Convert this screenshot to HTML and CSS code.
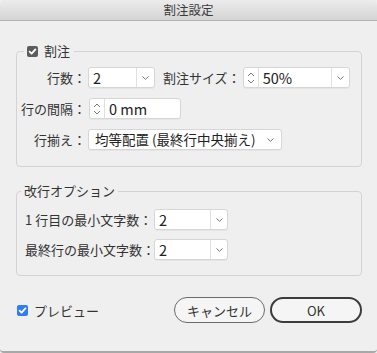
FILE: index.html
```html
<!DOCTYPE html>
<html lang="ja">
<head>
<meta charset="utf-8">
<link rel="stylesheet" href="styles.css">
</head>
<body>
<div class="window">
  <div class="titlebar">割注設定</div>
  <div class="content">
    <fieldset class="group g1">
      <legend class="legend"><span class="cb cb-gray"><svg viewBox="0 0 11 11" width="11" height="11"><path d="M2.6 5.6 L4.6 7.6 L8.4 3.4" fill="none" stroke="#fff" stroke-width="1.8" stroke-linecap="round" stroke-linejoin="round"/></svg></span>割注</legend>
      <div class="rows rows1">
        <div class="row">
          <span class="label l1">行数：</span>
          <div class="box select w-s1"><span class="val">2</span><span class="chev"><svg viewBox="0 0 7 4" width="7" height="4"><path d="M0.5 0.5 L3.5 3.3 L6.5 0.5" fill="none" stroke="#777" stroke-width="1"/></svg></span></div>
          <span class="label l-size">割注サイズ：</span>
          <div class="box spin w-sz"><span class="arrows"><svg viewBox="0 0 8 14" width="8" height="14"><path d="M1 5 L4 2 L7 5 M1 9 L4 12 L7 9" fill="none" stroke="#777" stroke-width="1"/></svg></span><span class="val">50%</span><span class="chev"><svg viewBox="0 0 7 4" width="7" height="4"><path d="M0.5 0.5 L3.5 3.3 L6.5 0.5" fill="none" stroke="#777" stroke-width="1"/></svg></span></div>
        </div>
        <div class="row">
          <span class="label l1">行の間隔：</span>
          <div class="box spin w-gap"><span class="arrows"><svg viewBox="0 0 8 14" width="8" height="14"><path d="M1 5 L4 2 L7 5 M1 9 L4 12 L7 9" fill="none" stroke="#777" stroke-width="1"/></svg></span><span class="val">0 mm</span></div>
        </div>
        <div class="row">
          <span class="label l1">行揃え：</span>
          <div class="box select w-align"><span class="val">均等配置 (最終行中央揃え)</span><span class="chev"><svg viewBox="0 0 7 4" width="7" height="4"><path d="M0.5 0.5 L3.5 3.3 L6.5 0.5" fill="none" stroke="#777" stroke-width="1"/></svg></span></div>
        </div>
      </div>
    </fieldset>

    <fieldset class="group g2">
      <legend class="legend legend2">改行オプション</legend>
      <div class="rows rows2">
        <div class="row">
          <span class="label l2">1 行目の最小文字数：</span>
          <div class="box select w-s2"><span class="val">2</span><span class="chev"><svg viewBox="0 0 7 4" width="7" height="4"><path d="M0.5 0.5 L3.5 3.3 L6.5 0.5" fill="none" stroke="#777" stroke-width="1"/></svg></span></div>
        </div>
        <div class="row">
          <span class="label l2">最終行の最小文字数：</span>
          <div class="box select w-s2"><span class="val">2</span><span class="chev"><svg viewBox="0 0 7 4" width="7" height="4"><path d="M0.5 0.5 L3.5 3.3 L6.5 0.5" fill="none" stroke="#777" stroke-width="1"/></svg></span></div>
        </div>
      </div>
    </fieldset>

    <div class="footer">
      <label class="preview"><span class="cb cb-blue"><svg viewBox="0 0 11 11" width="11" height="11"><path d="M2.6 5.6 L4.6 7.6 L8.4 3.4" fill="none" stroke="#fff" stroke-width="1.8" stroke-linecap="round" stroke-linejoin="round"/></svg></span>プレビュー</label>
      <div class="buttons">
        <button class="btn btn-cancel">キャンセル</button>
        <button class="btn btn-ok">OK</button>
      </div>
    </div>
  </div>
</div>
</body>
</html>
```

FILE: styles.css
```css
* { box-sizing: border-box; }
html, body { margin: 0; padding: 0; background: #efefef; }
body {
  font-family: "Noto Sans CJK JP", "Noto Sans", sans-serif;
  color: #333;
  font-size: 13px;
}
.window {
  width: 377px;
  height: 353px;
  background: #efefef;
  border-bottom: 2px solid #a8a8a8;
  border-radius: 5px 5px 4px 4px;
  overflow: hidden;
}
.titlebar {
  height: 21px;
  line-height: 20px;
  text-align: center;
  font-size: 12.5px;
  color: #3a3a3a;
  background: linear-gradient(#ececec, #d4d4d4);
  border-bottom: 1px solid #b3b3b3;
}
.content {
  padding: 21px 15px 0 16px;
}
.group {
  margin: 0;
  padding: 0;
  min-width: 0;
  border: 1px solid #d3d3d3;
  border-radius: 4px;
}
.g2 { margin-top: 15px; }
.legend {
  margin-left: 7px;
  padding: 0 4px 0 3px;
  line-height: 18px;
  height: 18px;
  font-size: 13px;
  color: #333;
}
.legend2 { margin-left: 4px; padding: 0 3px; }
.cb {
  display: inline-block;
  width: 11px;
  height: 11px;
  border-radius: 2px;
  vertical-align: -1px;
  margin-right: 6px;
}
.cb svg { display: block; }
.cb-gray { background: #5c5c5c; }
.cb-blue { background: #2f7cf6; margin-right: 6px; }
.rows {
  display: flex;
  flex-direction: column;
}
.rows1 { padding: 7px 0 16px 4px; gap: 10px; }
.rows2 { padding: 9px 0 15px 8px; gap: 9px; }
.row {
  display: flex;
  align-items: center;
  height: 21px;
}
.label {
  line-height: 21px;
  white-space: nowrap;
  color: #333;
}
.l1 { width: 65px; text-align: right; margin-right: 2px; }
.l2 { width: 129px; margin-right: 0; }
.l-size { margin-left: 8px; margin-right: 2px; }
.box {
  display: flex;
  align-items: stretch;
  height: 21px;
  background: #fff;
  border: 1px solid #d6d6d6;
  border-radius: 3px;
  box-shadow: 0 1px 0 rgba(0,0,0,0.04);
}
.val {
  flex: 1;
  padding-left: 4px;
  font-size: 14.5px;
  line-height: 19px;
  color: #222;
  white-space: nowrap;
  overflow: hidden;
}
.chev {
  width: 18px;
  border-left: 1px solid #e0e0e0;
  display: flex;
  align-items: center;
  justify-content: center;
}
.arrows {
  width: 15px;
  border-right: 1px solid #e0e0e0;
  display: flex;
  align-items: center;
  justify-content: center;
}
.w-s1 { width: 67px; }
.w-sz { width: 107px; }
.w-gap { width: 92px; margin-left: 1px; }
.w-align { width: 194px; }
.w-align .val { padding-left: 6px; font-size: 13.5px; }
.w-align .chev { border-left: none; width: 22px; }
.w-s2 { width: 74px; }
.w-s2 .chev { width: 17px; }
.footer {
  display: flex;
  align-items: center;
  justify-content: space-between;
  margin-top: 21px;
  height: 26px;
}
.preview {
  display: flex;
  align-items: center;
  margin-left: 1px;
  font-size: 13px;
  color: #333;
}
.buttons { display: flex; gap: 5px; }
.btn {
  font-family: "Noto Sans CJK JP", "Noto Sans", sans-serif;
  height: 26px;
  border-radius: 13px;
  background: #f5f5f5;
  font-size: 13px;
  color: #333;
  padding: 0;
  line-height: 1;
}
.btn-cancel { width: 91px; border: 1px solid #6a6a6a; }
.btn-ok { width: 92px; border: 2px solid #3c3c3c; }
```
